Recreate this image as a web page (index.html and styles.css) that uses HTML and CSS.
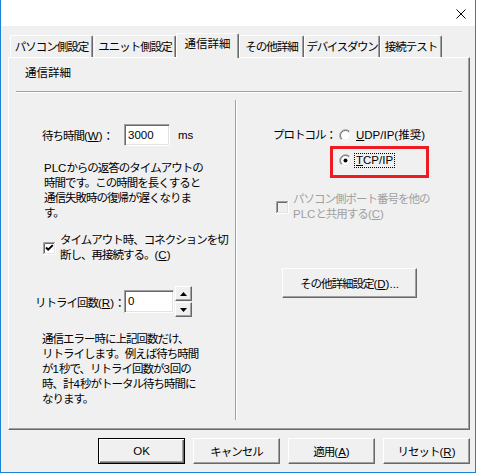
FILE: index.html
```html
<!DOCTYPE html>
<html lang="ja">
<head>
<meta charset="utf-8">
<title>通信詳細</title>
<link rel="stylesheet" href="styles.css">
</head>
<body>
<div class="window">
  <div class="titlebar">
    <svg class="close" width="10" height="10" viewBox="0 0 10 10"><path d="M0.5 0.5 L9.5 9.5 M9.5 0.5 L0.5 9.5" stroke="#000" stroke-width="1" fill="none"/></svg>
  </div>
  <div class="client">
    <div class="tabstrip">
      <div class="tab t1">パソコン側設定</div>
      <div class="tab t2">ユニット側設定</div>
      <div class="tab sel kanji">通信詳細</div>
      <div class="tab t4">その他詳細</div>
      <div class="tab t5">デバイスダウン</div>
      <div class="tab t6">接続テスト</div>
    </div>
    <div class="panel">
      <div class="group-title kanji">通信詳細</div>
      <div class="hsep"></div>
      <div class="cols">
        <div class="col-left">
          <div class="field wait">
            <span class="lw">待ち時間<span class="lat">(<u>W</u>)</span>：</span>
            <span class="edit e1 lat">3000</span>
            <span class="unit lat">ms</span>
          </div>
          <p class="note n1"><span class="lat">PLC</span>からの返答のタイムアウトの<br>時間です。この時間を長くすると<br>通信失敗時の復帰が遅くなりま<br>す。</p>
          <div class="check c1">
            <svg class="box" width="13" height="13" viewBox="0 0 13 13">
              <rect x="0" y="0" width="13" height="13" fill="#fff"/>
              <path d="M0.5 12 V0.5 H12" stroke="#a0a0a0" fill="none"/>
              <path d="M1.5 11 V1.5 H11" stroke="#696969" fill="none"/>
              <path d="M0 12.5 H12.5 V0" stroke="#fff" fill="none"/>
              <path d="M1 11.5 H11.5 V1" stroke="#e3e3e3" fill="none"/>
              <path d="M3 5.5 L5.2 7.7 L9.8 3.1" stroke="#000" stroke-width="2" fill="none"/>
            </svg>
            <span class="ctext">タイムアウト時、コネクションを切<br>断し、再接続する。<span class="lat">(<u>C</u>)</span></span>
          </div>
          <div class="field retry">
            <span class="lr">リトライ回数<span class="lat">(<u>R</u>)</span>：</span>
            <span class="edit e2 lat">0</span>
            <span class="spin">
              <span class="sbtn"><svg width="7" height="4" viewBox="0 0 7 4"><path d="M3.5 0 L7 4 L0 4 Z" fill="#000"/></svg></span>
              <span class="sbtn"><svg width="7" height="4" viewBox="0 0 7 4"><path d="M0 0 L7 0 L3.5 4 Z" fill="#000"/></svg></span>
            </span>
          </div>
          <p class="note n2">通信エラー時に上記回数だけ、<br>リトライします。例えば待ち時間<br>が<span class="lat">1</span>秒で、リトライ回数が<span class="lat">3</span>回の<br>時、計<span class="lat">4</span>秒がトータル待ち時間に<br>なります。</p>
        </div>
        <div class="vsep"></div>
        <div class="col-right">
          <div class="proto">
            <span class="plabel">プロトコル：</span>
            <div class="radios">
              <div class="opt">
                <svg class="radio" width="13" height="13" viewBox="0 0 13 13">
                  <circle cx="6.5" cy="6.5" r="6" fill="#fff"/>
                  <path d="M2.26 10.74 A6 6 0 0 1 10.74 2.26" stroke="#a0a0a0" fill="none"/>
                  <path d="M10.74 2.26 A6 6 0 0 1 2.26 10.74" stroke="#fff" fill="none"/>
                  <path d="M2.96 10.04 A5 5 0 0 1 10.04 2.96" stroke="#696969" fill="none"/>
                  <path d="M10.04 2.96 A5 5 0 0 1 2.96 10.04" stroke="#e3e3e3" fill="none"/>
                </svg>
                <span class="otext lat"><u>U</u>DP/IP(推奨)</span>
              </div>
              <div class="opt o2">
                <svg class="radio" width="13" height="13" viewBox="0 0 13 13">
                  <circle cx="6.5" cy="6.5" r="6" fill="#fff"/>
                  <path d="M2.26 10.74 A6 6 0 0 1 10.74 2.26" stroke="#a0a0a0" fill="none"/>
                  <path d="M10.74 2.26 A6 6 0 0 1 2.26 10.74" stroke="#fff" fill="none"/>
                  <path d="M2.96 10.04 A5 5 0 0 1 10.04 2.96" stroke="#696969" fill="none"/>
                  <path d="M10.04 2.96 A5 5 0 0 1 2.96 10.04" stroke="#e3e3e3" fill="none"/>
                  <circle cx="6.5" cy="6.5" r="2" fill="#000"/>
                </svg>
                <span class="otext focus lat"><u>T</u>CP/IP</span>
                <span class="mark"></span>
              </div>
            </div>
          </div>
          <div class="check c2">
            <svg class="box" width="13" height="13" viewBox="0 0 13 13">
              <rect x="0" y="0" width="13" height="13" fill="#f0f0f0"/>
              <path d="M0.5 12 V0.5 H12" stroke="#a0a0a0" fill="none"/>
              <path d="M1.5 11 V1.5 H11" stroke="#696969" fill="none"/>
              <path d="M0 12.5 H12.5 V0" stroke="#fff" fill="none"/>
              <path d="M1 11.5 H11.5 V1" stroke="#e3e3e3" fill="none"/>
            </svg>
            <span class="ctext">パソコン側ポート番号を他の<br><span class="lat">PLC</span>と共用する<span class="lat">(<u>C</u>)</span></span>
          </div>
          <button class="btn more">その他詳細設定<span class="lat">(<u>D</u>)...</span></button>
        </div>
      </div>
    </div>
    <div class="buttons">
      <button class="btn default"><span class="lat">OK</span></button>
      <button class="btn">キャンセル</button>
      <button class="btn">適用<span class="lat">(<u>A</u>)</span></button>
      <button class="btn">リセット<span class="lat">(<u>R</u>)</span></button>
    </div>
  </div>
</div>
</body>
</html>
```
FILE: styles.css
```css
* { box-sizing: border-box; }
html, body { margin: 0; padding: 0; background: #fff; }
body {
  font-family: "Liberation Sans", "Noto Sans CJK JP", sans-serif;
  font-size: 11.5px;
  letter-spacing: -1px;
  color: #000;
}
.lat { letter-spacing: 0; }
.kanji { letter-spacing: 0; }
.window {
  width: 476px;
  height: 473px;
  border: 1px solid #1883d7;
  border-top: none;
  background: #f0f0f0;
  display: flex;
  flex-direction: column;
}
.titlebar {
  height: 26px;
  flex: none;
  background: #fff;
  display: flex;
  justify-content: flex-end;
  align-items: flex-start;
}
.close { margin: 9px 9px 0 0; }
.client { flex: 1; padding: 7px 0 0 7px; }

.tabstrip {
  display: flex;
  align-items: flex-end;
  padding-left: 2px;
  height: 24px;
  position: relative;
  z-index: 1;
}
.tab {
  height: 22px;
  background: #f0f0f0;
  border-top: 1px solid #fff;
  border-left: 1px solid #fff;
  border-right: 1px solid #696969;
  box-shadow: inset -1px 0 #a0a0a0;
  border-top-left-radius: 2px;
  border-top-right-radius: 2px;
  text-align: center;
  padding-top: 4px;
  line-height: 15px;
  white-space: nowrap;
}
.tab.sel { height: 25px; margin-bottom: -1px; padding-top: 3px; width: 63px; }
.t1 { width: 83px; margin-right: 1px; }
.t2 { width: 82px; }
.t4 { width: 65px; }
.t5 { width: 76px; letter-spacing: -1.3px; }
.t6 { width: 62px; }

.panel {
  width: 462px;
  height: 373px;
  border-top: 1px solid #fff;
  border-left: 1px solid #fff;
  border-right: 1px solid #696969;
  border-bottom: 1px solid #696969;
  box-shadow: inset -1px -1px #a0a0a0;
}
.group-title { margin: 7px 0 0 16px; line-height: 16px; }
.hsep {
  margin: 10px 7px 0 7px;
  height: 2px;
  border-top: 1px solid #a0a0a0;
  border-bottom: 1px solid #fff;
}
.cols { display: flex; margin-top: 7px; height: 320px; }
.col-left { width: 226px; flex: none; }
.vsep { width: 2px; flex: none; border-left: 1px solid #a0a0a0; border-right: 1px solid #fff; }
.col-right { flex: 1; }

.field { display: flex; align-items: center; }
.wait { margin: 24px 0 0 33px; height: 22px; }
.lw { width: 82px; flex: none; white-space: nowrap; }
.edit {
  height: 22px;
  background: #fff;
  border-top: 1px solid #a0a0a0;
  border-left: 1px solid #a0a0a0;
  border-right: 1px solid #fff;
  border-bottom: 1px solid #fff;
  box-shadow: inset 1px 1px #696969, inset -1px -1px #e3e3e3;
  padding-left: 3px;
  line-height: 20px;
}
.e1 { width: 46px; }
.unit { margin-left: 8px; }

.note { margin: 0; line-height: 15px; white-space: nowrap; }
.n1 { margin: 15px 0 0 35px; }
.n2 { margin: 15px 0 0 33px; }

.check { display: flex; align-items: center; line-height: 15px; }
.c1 { margin: 12px 0 0 34px; }
.box { flex: none; display: block; }
.ctext { margin-left: 4px; white-space: nowrap; }
.c2 { margin: 24px 0 0 39px; color: #a0a0a0; }

.retry { margin: 23px 0 0 26px; height: 31px; }
.lr { width: 89px; flex: none; white-space: nowrap; }
.e2 { width: 50px; height: 23px; }
.spin { display: flex; flex-direction: column; gap: 1px; margin-left: 1px; }
.sbtn {
  width: 17px;
  height: 15px;
  background: #f0f0f0;
  border-top: 1px solid #fff;
  border-left: 1px solid #fff;
  border-right: 1px solid #696969;
  border-bottom: 1px solid #696969;
  box-shadow: inset -1px -1px #a0a0a0;
  display: flex;
  align-items: center;
  justify-content: center;
}
.sbtn svg { display: block; }

.proto { display: flex; margin: 27px 0 0 36px; }
.plabel { width: 66px; flex: none; line-height: 16px; white-space: nowrap; }
.opt { display: flex; align-items: center; height: 16px; position: relative; }
.o2 { margin-top: 9px; }
.radio { flex: none; display: block; }
.otext {
  margin-left: 2px;
  border: 1px dotted transparent;
  padding: 0 1px;
  line-height: 13px;
  white-space: nowrap;
}
.otext.focus { border-color: #000; }
.mark {
  position: absolute;
  left: -9px;
  top: -6px;
  width: 99px;
  height: 32px;
  border: 3px solid #ed1c24;
}

.btn {
  font: inherit;
  letter-spacing: inherit;
  color: #000;
  background: #f0f0f0;
  border-top: 1px solid #fff;
  border-left: 1px solid #fff;
  border-right: 1px solid #696969;
  border-bottom: 1px solid #696969;
  box-shadow: inset -1px -1px #a0a0a0;
  padding: 0;
  white-space: nowrap;
}
.more { display: block; margin: 46px 0 0 45px; width: 135px; height: 30px; }
.buttons {
  display: flex;
  justify-content: flex-end;
  gap: 8px;
  margin-top: 8px;
  padding-right: 5px;
}
.buttons .btn { width: 87px; height: 26px; }
.btn.default {
  border: 1px solid #000;
  box-shadow: inset 1px 1px #fff, inset -1px -1px #696969, inset -2px -2px #a0a0a0;
}
```
